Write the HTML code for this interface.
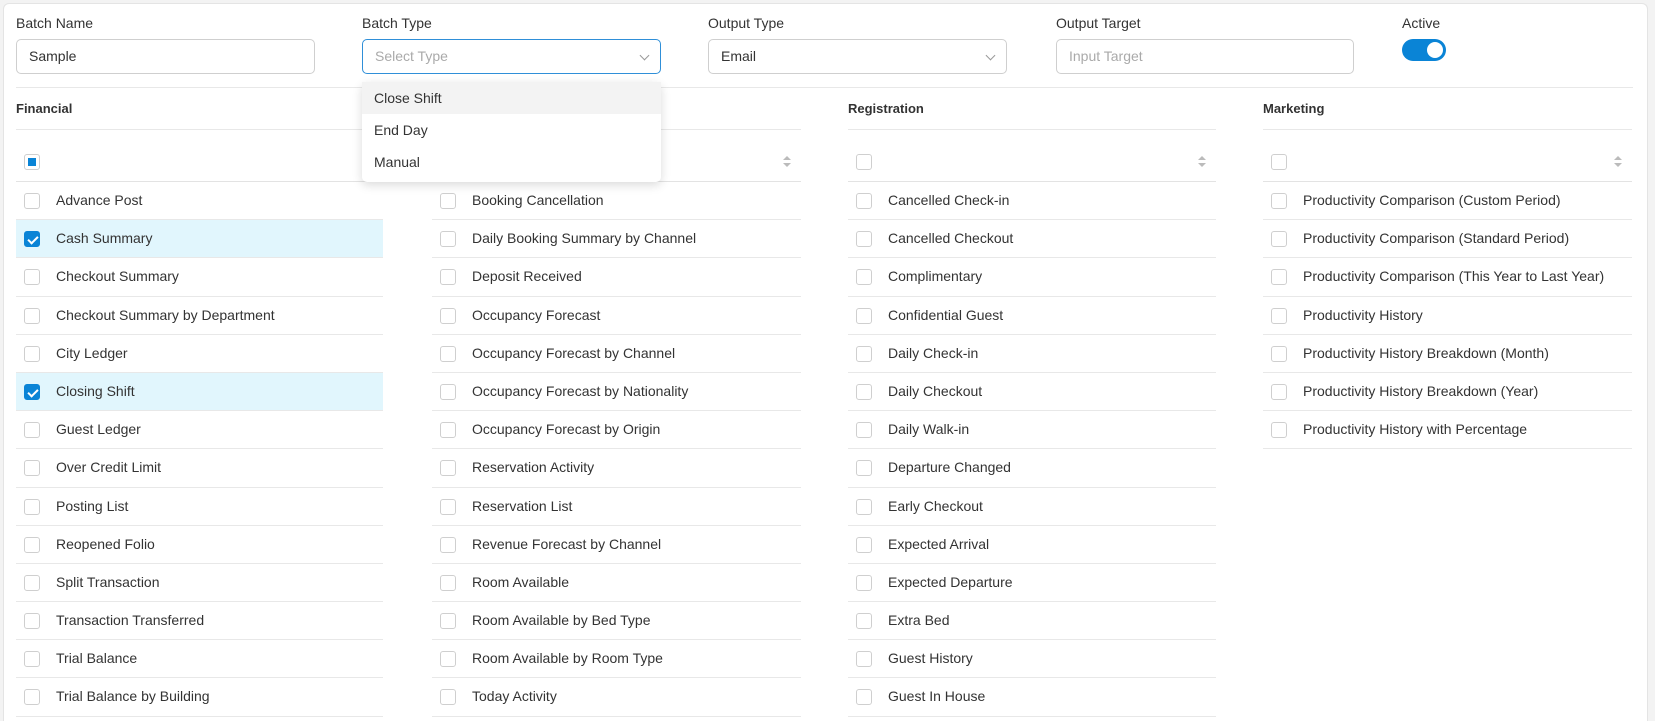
<!DOCTYPE html>
<html><head><meta charset="utf-8"><style>
*{box-sizing:border-box;margin:0;padding:0}
html{width:1655px;height:721px;overflow:hidden}
body{width:1655px;height:721px;overflow:hidden;position:relative;background:#f3f3f3;font-family:"Liberation Sans",sans-serif;color:#333;font-size:14px}
.card{position:absolute;left:3px;top:3px;width:1645px;height:718px;background:#fff;border:1px solid #e4e4e4;border-bottom:none;border-radius:6px 6px 0 0}
.lbl{position:absolute;top:15px;font-size:14px;color:#333}
.inp{position:absolute;top:39px;height:35px;border:1px solid #cfcfcf;border-radius:5px;padding-left:12px;line-height:33px;font-size:14px;color:#333}
.ph{color:#aaa}
.chev{position:absolute;right:12px;top:12px;width:7px;height:7px;border-right:1px solid #999;border-bottom:1px solid #999;transform:rotate(45deg)}
.hr{position:absolute;left:16px;width:1617px;top:87px;height:1px;background:#e8e8e8}
.col{position:absolute;top:87px}
.sec{height:43px;line-height:43px;font-weight:bold;font-size:13px;color:#333;border-bottom:1px solid #e8e8e8}
.hd{height:52px;border-bottom:1px solid #e3e3e3;position:relative}
.row{height:38.2px;border-bottom:1px solid #e8e8e8;position:relative;line-height:36px;padding-left:40px;font-size:14px;color:#333;white-space:nowrap}
.row.sel{background:#e1f6fd}
.cb{position:absolute;left:8px;top:11px;width:16px;height:16px;border:1px solid #cfcfcf;border-radius:3px;background:#fff}
.hd .cb{top:24px}
.cb.on{background:#0a84d6;border-color:#0a84d6}
.cb.on:after{content:"";position:absolute;left:5px;top:2px;width:4px;height:8px;border-right:2px solid #fff;border-bottom:2px solid #fff;transform:rotate(45deg)}
.cb.ind:after{content:"";position:absolute;left:3px;top:3px;width:8px;height:8px;background:#0a84d6}
.sort{position:absolute;right:10px;top:26px;width:8px;height:12px}
.sort:before{content:"";position:absolute;left:0;top:0;border:4px solid transparent;border-bottom:4px solid #bbb;border-top:0}
.sort:after{content:"";position:absolute;left:0;top:7px;border:4px solid transparent;border-top:4px solid #bbb;border-bottom:0}
.dd{position:absolute;left:362px;top:82px;width:299px;height:100px;background:#fff;border-radius:5px;box-shadow:0 3px 10px rgba(0,0,0,.15);padding-top:0;z-index:5}
.dd div{height:32px;line-height:32px;padding-left:12px;font-size:14px}
.dd div.h{background:#f3f3f3}
.tog{position:absolute;left:1402px;top:39px;width:44px;height:22px;border-radius:11px;background:#0a84d6}
.tog:after{content:"";position:absolute;right:3px;top:3px;width:16px;height:16px;border-radius:50%;background:#fff}
</style></head><body>
<div class="card"></div>
<div class="lbl" style="left:16px">Batch Name</div>
<div class="lbl" style="left:362px">Batch Type</div>
<div class="lbl" style="left:708px">Output Type</div>
<div class="lbl" style="left:1056px">Output Target</div>
<div class="lbl" style="left:1402px">Active</div>
<div class="inp" style="left:16px;width:299px">Sample</div>
<div class="inp" style="left:362px;width:299px;border-color:#2f8fd8"><span class="ph">Select Type</span><span class="chev"></span></div>
<div class="inp" style="left:708px;width:299px">Email<span class="chev"></span></div>
<div class="inp" style="left:1056px;width:298px"><span class="ph">Input Target</span></div>
<div class="tog"></div>
<div class="hr"></div>

<div class="col" style="left:16px;width:367px">
<div class="sec">Financial</div>
<div class="hd"><span class="cb ind"></span></div>
<div class="row"><span class="cb"></span>Advance Post</div>
<div class="row sel"><span class="cb on"></span>Cash Summary</div>
<div class="row"><span class="cb"></span>Checkout Summary</div>
<div class="row"><span class="cb"></span>Checkout Summary by Department</div>
<div class="row"><span class="cb"></span>City Ledger</div>
<div class="row sel"><span class="cb on"></span>Closing Shift</div>
<div class="row"><span class="cb"></span>Guest Ledger</div>
<div class="row"><span class="cb"></span>Over Credit Limit</div>
<div class="row"><span class="cb"></span>Posting List</div>
<div class="row"><span class="cb"></span>Reopened Folio</div>
<div class="row"><span class="cb"></span>Split Transaction</div>
<div class="row"><span class="cb"></span>Transaction Transferred</div>
<div class="row"><span class="cb"></span>Trial Balance</div>
<div class="row"><span class="cb"></span>Trial Balance by Building</div>
</div>

<div class="col" style="left:432px;width:369px">
<div class="sec">Reservation</div>
<div class="hd"><span class="cb"></span><span class="sort"></span></div>
<div class="row"><span class="cb"></span>Booking Cancellation</div>
<div class="row"><span class="cb"></span>Daily Booking Summary by Channel</div>
<div class="row"><span class="cb"></span>Deposit Received</div>
<div class="row"><span class="cb"></span>Occupancy Forecast</div>
<div class="row"><span class="cb"></span>Occupancy Forecast by Channel</div>
<div class="row"><span class="cb"></span>Occupancy Forecast by Nationality</div>
<div class="row"><span class="cb"></span>Occupancy Forecast by Origin</div>
<div class="row"><span class="cb"></span>Reservation Activity</div>
<div class="row"><span class="cb"></span>Reservation List</div>
<div class="row"><span class="cb"></span>Revenue Forecast by Channel</div>
<div class="row"><span class="cb"></span>Room Available</div>
<div class="row"><span class="cb"></span>Room Available by Bed Type</div>
<div class="row"><span class="cb"></span>Room Available by Room Type</div>
<div class="row"><span class="cb"></span>Today Activity</div>
</div>

<div class="col" style="left:848px;width:368px">
<div class="sec">Registration</div>
<div class="hd"><span class="cb"></span><span class="sort"></span></div>
<div class="row"><span class="cb"></span>Cancelled Check-in</div>
<div class="row"><span class="cb"></span>Cancelled Checkout</div>
<div class="row"><span class="cb"></span>Complimentary</div>
<div class="row"><span class="cb"></span>Confidential Guest</div>
<div class="row"><span class="cb"></span>Daily Check-in</div>
<div class="row"><span class="cb"></span>Daily Checkout</div>
<div class="row"><span class="cb"></span>Daily Walk-in</div>
<div class="row"><span class="cb"></span>Departure Changed</div>
<div class="row"><span class="cb"></span>Early Checkout</div>
<div class="row"><span class="cb"></span>Expected Arrival</div>
<div class="row"><span class="cb"></span>Expected Departure</div>
<div class="row"><span class="cb"></span>Extra Bed</div>
<div class="row"><span class="cb"></span>Guest History</div>
<div class="row"><span class="cb"></span>Guest In House</div>
</div>

<div class="col" style="left:1263px;width:369px">
<div class="sec">Marketing</div>
<div class="hd"><span class="cb"></span><span class="sort"></span></div>
<div class="row"><span class="cb"></span>Productivity Comparison (Custom Period)</div>
<div class="row"><span class="cb"></span>Productivity Comparison (Standard Period)</div>
<div class="row"><span class="cb"></span>Productivity Comparison (This Year to Last Year)</div>
<div class="row"><span class="cb"></span>Productivity History</div>
<div class="row"><span class="cb"></span>Productivity History Breakdown (Month)</div>
<div class="row"><span class="cb"></span>Productivity History Breakdown (Year)</div>
<div class="row"><span class="cb"></span>Productivity History with Percentage</div>
</div>

<div class="dd">
<div class="h">Close Shift</div>
<div>End Day</div>
<div>Manual</div>
</div>
</body></html>
